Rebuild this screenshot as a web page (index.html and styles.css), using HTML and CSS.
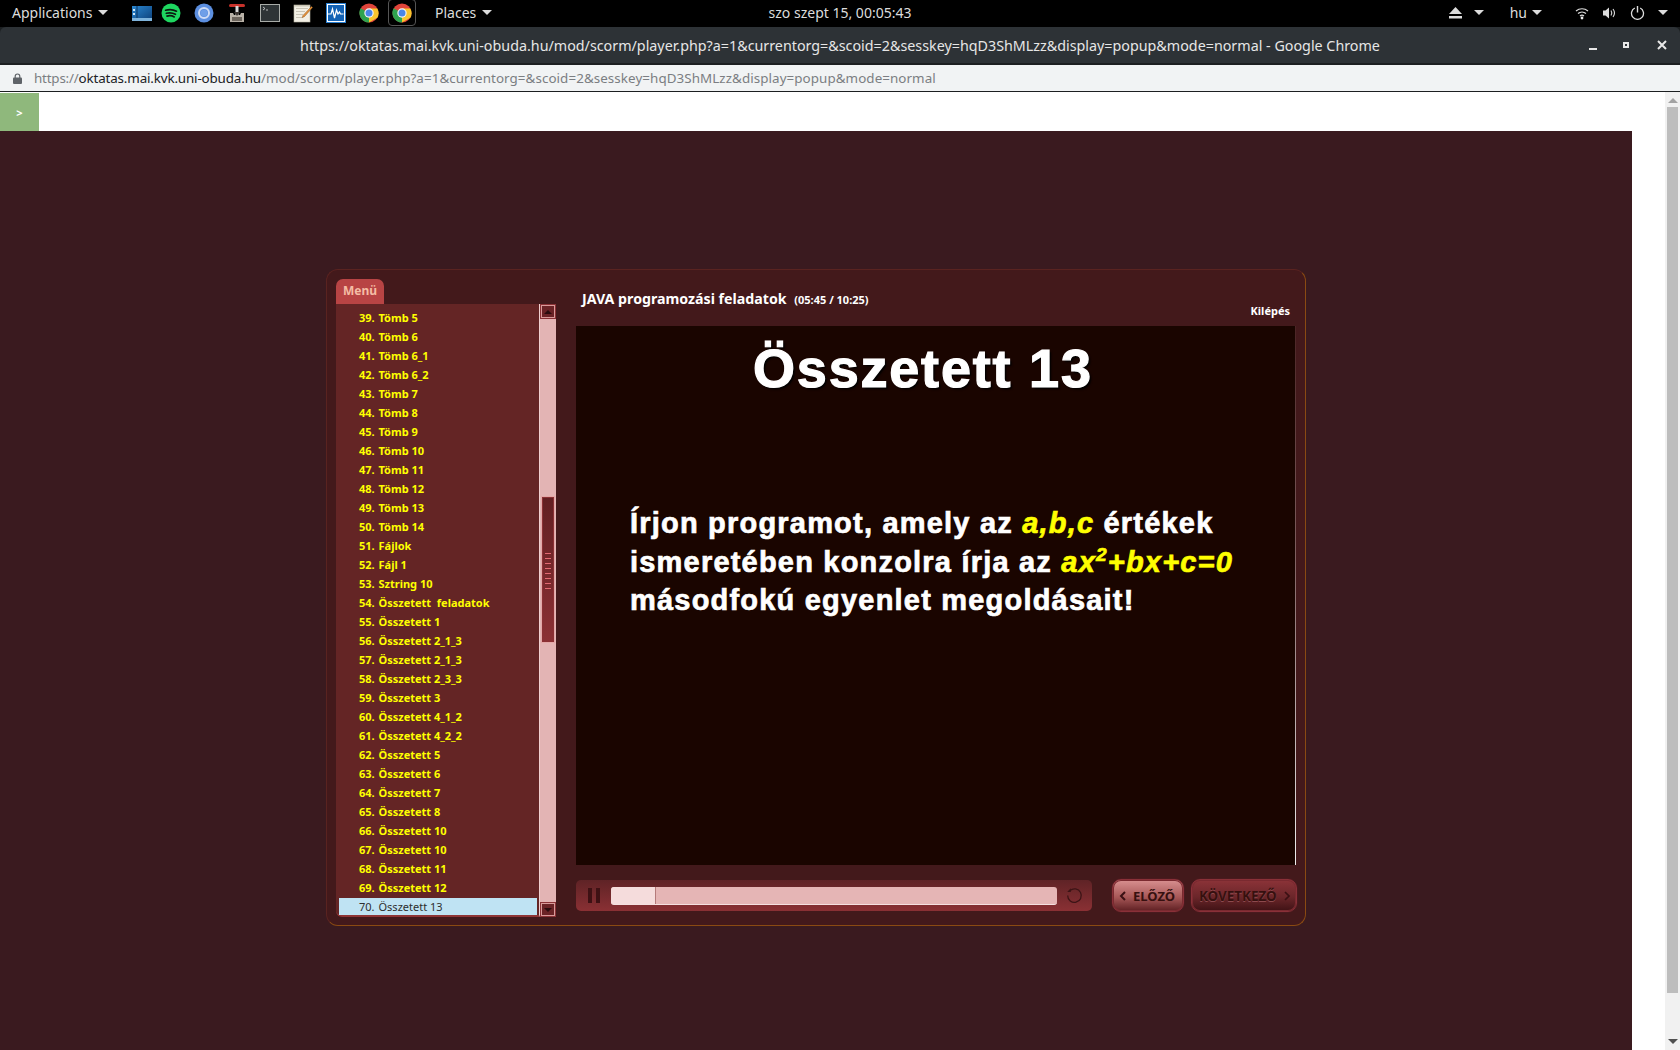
FILE: index.html
```html
<!DOCTYPE html>
<html lang="hu">
<head>
<meta charset="utf-8">
<title>JAVA programozási feladatok</title>
<link rel="stylesheet" href="styles.css">
</head>
<body>
<header class="topbar">
  <div class="tb-left">
    <span class="tb-label tb-apps">Applications<i class="caret"></i></span>
    <div class="launcher">
      <span class="lb lb-first"><svg width="20" height="20" viewBox="0 0 20 20"><defs><linearGradient id="g1" x1="0" y1="0" x2="1" y2="1"><stop offset="0" stop-color="#2a86cf"/><stop offset="1" stop-color="#0d3f78"/></linearGradient></defs><rect y="3" width="20" height="15" fill="url(#g1)"/><rect y="15" width="20" height="3" fill="#7fb4dc"/><path d="M1 6h2v2H1zM1 10h2v2H1z" fill="#cfe6f7"/><path d="M5 3v12" stroke="#0a3560"/></svg></span>
      <span class="lb"><svg width="20" height="20" viewBox="0 0 20 20"><circle cx="10" cy="10" r="9.500" fill="#1ed760"/><path d="M4.600 7.200c3.800-1.100 7.600-.8 10.900 1M5.300 10.300c3.200-.9 6.300-.6 9.100 1M6 13.100c2.600-.7 5-.5 7.300.8" fill="none" stroke="#0b1a10" stroke-width="1.700" stroke-linecap="round"/></svg></span>
      <span class="lb"><svg width="20" height="20" viewBox="0 0 20 20"><circle cx="10" cy="10" r="9.500" fill="#5c8fe0"/><circle cx="10" cy="10" r="5" fill="none" stroke="#cfdcf5" stroke-width="2"/><circle cx="10" cy="10" r="3.300" fill="#6f9fe8"/></svg></span>
      <span class="lb"><svg width="20" height="20" viewBox="0 0 20 20"><rect x="2" y="1" width="16" height="3" rx="1.500" fill="#c8322b"/><rect x="8.500" y="3" width="3" height="9" fill="#d8d8d8"/><path d="M3 10h3l1 2h6l1-2h3v9H3z" fill="#b9b2a8"/><path d="M7 9l3 4 3-4z" fill="#3c3632"/><rect x="5" y="14" width="10" height="4" fill="#6d665e"/></svg></span>
      <span class="lb"><svg width="20" height="20" viewBox="0 0 20 20"><rect x=".5" y="1.500" width="19" height="17" fill="#2e3436" stroke="#a8aca8"/><path d="M3 4l2 1.500L3 7" fill="none" stroke="#ddd" stroke-width=".8"/><path d="M6 7h2" stroke="#ddd" stroke-width=".8"/></svg></span>
      <span class="lb"><svg width="20" height="20" viewBox="0 0 20 20"><rect x="1" y="2" width="16" height="17" fill="#f2efe4" stroke="#b9b5a4" stroke-width=".6"/><path d="M3 5.500h12M3 8.500h9M3 11.500h7M3 14.500h6" stroke="#bdb9aa" stroke-width=".8"/><path d="M1 2h16v1.500H1z" fill="#c9c5b5"/><path d="M18.500 3.500l1 1-8 9-2.300 1.200.8-2.300z" fill="#e8923a" stroke="#8a5519" stroke-width=".5"/></svg></span>
      <span class="lb"><svg width="20" height="20" viewBox="0 0 20 20"><rect x=".5" y=".5" width="19" height="19" fill="#fff" stroke="#2a7fd0"/><rect x="2" y="2" width="16" height="16" fill="#1262b5"/><path d="M2 11h3l1.500-5 2 9 2-8 1.500 4 1.500-2 1 2h3" fill="none" stroke="#fff" stroke-width="1.200"/></svg></span>
      <span class="lb"><svg width="20" height="20" viewBox="0 0 20 20"><circle cx="10" cy="10" r="9.500" fill="#e0443a"/><path d="M10 10L1.700 5.200A9.500 9.500 0 0 0 10 19.500z" fill="#2fa34f"/><path d="M10 5.500h8.300a9.500 9.500 0 0 1 .1 9.200L10 19.500z" fill="#f9c52d"/><circle cx="10" cy="10" r="4.700" fill="#f4f4f4"/><circle cx="10" cy="10" r="3.500" fill="#4a86e8"/></svg></span>
      <span class="lb lb-active"><svg width="20" height="20" viewBox="0 0 20 20"><circle cx="10" cy="10" r="9.500" fill="#e0443a"/><path d="M10 10L1.700 5.200A9.500 9.500 0 0 0 10 19.500z" fill="#2fa34f"/><path d="M10 5.500h8.300a9.500 9.500 0 0 1 .1 9.200L10 19.500z" fill="#f9c52d"/><circle cx="10" cy="10" r="4.700" fill="#f4f4f4"/><circle cx="10" cy="10" r="3.500" fill="#4a86e8"/></svg></span>
    </div>
    <span class="tb-label tb-places">Places<i class="caret"></i></span>
  </div>
  <div class="tb-clock">szo szept 15, 00:05:43</div>
  <div class="tb-right">
    <span class="tray tray-eject"><svg width="15" height="12" viewBox="0 0 15 12"><path d="M7.500 0L14 7H1z" fill="#ddd"/><rect x="1" y="9" width="13" height="2.500" fill="#ddd"/></svg><i class="caret"></i></span>
    <span class="tb-label tray-hu">hu<i class="caret"></i></span>
    <span class="tray tray-status">
      <svg width="14" height="14" viewBox="0 0 14 14"><path d="M1 5c3.500-3 8.500-3 12 0M3 7.500c2.300-2 5.700-2 8 0M5 10c1.200-1 2.800-1 4 0" fill="none" stroke="#ddd" stroke-width="1.200"/><circle cx="7" cy="12" r="1.400" fill="#eee"/></svg>
      <svg width="15" height="14" viewBox="0 0 15 14"><path d="M1 4.500h2.500L7 1.500v11l-3.500-3H1z" fill="#ddd"/><path d="M9 4.500c1 1.500 1 3.500 0 5M11 3c1.800 2.400 1.800 5.600 0 8" fill="none" stroke="#ddd" stroke-width="1.100"/></svg>
      <svg width="15" height="15" viewBox="0 0 15 15"><path d="M4.800 3a6 6 0 1 0 5.400 0" fill="none" stroke="#ddd" stroke-width="1.300"/><path d="M7.500 1v6.500" stroke="#ddd" stroke-width="1.400"/></svg>
      <i class="caret"></i>
    </span>
  </div>
</header>

<div class="window">
  <div class="titlebar">
    <div class="win-title">https://oktatas.mai.kvk.uni-obuda.hu/mod/scorm/player.php?a=1&amp;currentorg=&amp;scoid=2&amp;sesskey=hqD3ShMLzz&amp;display=popup&amp;mode=normal - Google Chrome</div>
    <div class="win-btns">
      <i class="wb wb-min"></i>
      <i class="wb wb-max"></i>
      <svg class="wb-close" width="10" height="10" viewBox="0 0 10 10"><path d="M1 1l8 8M9 1l-8 8" stroke="#e8e8e8" stroke-width="2"/></svg>
    </div>
  </div>
  <div class="addrbar">
    <svg class="lock" width="9" height="11" viewBox="0 0 9 11"><path d="M2.200 5V3.300a2.300 2.300 0 0 1 4.600 0V5" fill="none" stroke="#5f6368" stroke-width="1.200"/><rect y="4.500" width="9" height="6.500" rx="1" fill="#5f6368"/></svg>
    <span class="url"><span class="url-scheme">https://</span><span class="url-host">oktatas.mai.kvk.uni-obuda.hu</span><span class="url-path">/mod/scorm/player.php?a=1&amp;currentorg=&amp;scoid=2&amp;sesskey=hqD3ShMLzz&amp;display=popup&amp;mode=normal</span></span>
  </div>

  <div class="viewport">
    <div class="page">
      <div class="strip"><button class="toggle">&gt;</button></div>
      <main class="stagebg">
        <section class="card">
          <aside class="side">
            <div class="tab">Menü</div>
            <div class="listwrap">
              <ol class="list">
                <li class="row"><span class="n">39.</span><span>Tömb 5</span></li>
                <li class="row"><span class="n">40.</span><span>Tömb 6</span></li>
                <li class="row"><span class="n">41.</span><span>Tömb 6_1</span></li>
                <li class="row"><span class="n">42.</span><span>Tömb 6_2</span></li>
                <li class="row"><span class="n">43.</span><span>Tömb 7</span></li>
                <li class="row"><span class="n">44.</span><span>Tömb 8</span></li>
                <li class="row"><span class="n">45.</span><span>Tömb 9</span></li>
                <li class="row"><span class="n">46.</span><span>Tömb 10</span></li>
                <li class="row"><span class="n">47.</span><span>Tömb 11</span></li>
                <li class="row"><span class="n">48.</span><span>Tömb 12</span></li>
                <li class="row"><span class="n">49.</span><span>Tömb 13</span></li>
                <li class="row"><span class="n">50.</span><span>Tömb 14</span></li>
                <li class="row"><span class="n">51.</span><span>Fájlok</span></li>
                <li class="row"><span class="n">52.</span><span>Fájl 1</span></li>
                <li class="row"><span class="n">53.</span><span>Sztring 10</span></li>
                <li class="row"><span class="n">54.</span><span>Összetett&nbsp; feladatok</span></li>
                <li class="row"><span class="n">55.</span><span>Összetett 1</span></li>
                <li class="row"><span class="n">56.</span><span>Összetett 2_1_3</span></li>
                <li class="row"><span class="n">57.</span><span>Összetett 2_1_3</span></li>
                <li class="row"><span class="n">58.</span><span>Összetett 2_3_3</span></li>
                <li class="row"><span class="n">59.</span><span>Összetett 3</span></li>
                <li class="row"><span class="n">60.</span><span>Összetett 4_1_2</span></li>
                <li class="row"><span class="n">61.</span><span>Összetett 4_2_2</span></li>
                <li class="row"><span class="n">62.</span><span>Összetett 5</span></li>
                <li class="row"><span class="n">63.</span><span>Összetett 6</span></li>
                <li class="row"><span class="n">64.</span><span>Összetett 7</span></li>
                <li class="row"><span class="n">65.</span><span>Összetett 8</span></li>
                <li class="row"><span class="n">66.</span><span>Összetett 10</span></li>
                <li class="row"><span class="n">67.</span><span>Összetett 10</span></li>
                <li class="row"><span class="n">68.</span><span>Összetett 11</span></li>
                <li class="row"><span class="n">69.</span><span>Összetett 12</span></li>
                <li class="row row-current"><span class="n">70.</span><span>Összetett 13</span></li>
              </ol>
              <div class="mscroll">
                <span class="mbtn"><i class="tri-up"></i></span>
                <div class="mtrack">
                  <div class="mthumb"><div class="grip"><i></i><i></i><i></i><i></i><i></i><i></i><i></i><i></i></div></div>
                </div>
                <span class="mbtn"><i class="tri-down"></i></span>
              </div>
            </div>
          </aside>
          <div class="content">
            <div class="head">
              <div class="heading">JAVA programozási feladatok <small>(05:45 / 10:25)</small></div>
              <div class="exit">Kilépés</div>
            </div>
            <div class="slide">
              <h1>Összetett 13</h1>
              <p>Írjon programot, amely az <em>a,b,c</em> értékek<br>ismeretében konzolra írja az <em>ax<sup>2</sup>+bx+c=0</em><br>másodfokú egyenlet megoldásait!</p>
            </div>
            <div class="controls">
              <div class="player">
                <span class="pause"><i></i><i></i></span>
                <div class="bar"><div class="bar-fill"></div></div>
                <svg class="reload" width="17" height="17" viewBox="0 0 17 17"><path d="M4 3.500A6.800 6.800 0 1 1 1.700 8.500" fill="none" stroke="#3c1416" stroke-width="1.300"/><path d="M4.800 1.300v3.600H1.200z" fill="#3c1416"/></svg>
              </div>
              <button class="nav nav-prev"><svg width="8" height="10" viewBox="0 0 8 10"><path d="M6 1L2 5l4 4" fill="none" stroke="#3a1013" stroke-width="2"/></svg>ELŐZŐ</button>
              <button class="nav nav-next">KÖVETKEZŐ<svg width="8" height="10" viewBox="0 0 8 10"><path d="M2 1l4 4-4 4" fill="none" stroke="#3a1013" stroke-width="1.700"/></svg></button>
            </div>
          </div>
        </section>
      </main>
    </div>
    <div class="vscroll"><i class="vs-up"></i><div class="vs-thumb"></div><i class="vs-down"></i></div>
  </div>
</div>
</body>
</html>
```
FILE: styles.css
```css
* { box-sizing: border-box; }
html, body { margin: 0; height: 100%; }
body { width: 1680px; height: 1050px; overflow: hidden; background: #000; font-family: "Noto Sans", sans-serif; display: flex; flex-direction: column; }

.topbar { height: 27px; padding-bottom: 2px; background: #000; color: #dcdcdc; display: flex; align-items: center; position: relative; flex: none; font-size: 14px; }
.tb-left { display: flex; align-items: center; }
.tb-label { display: inline-flex; align-items: center; gap: 6px; }
.tb-apps { margin-left: 12px; width: 113px; }
.caret { display: inline-block; width: 0; height: 0; border-left: 5px solid transparent; border-right: 5px solid transparent; border-top: 5px solid #dcdcdc; }
.launcher { display: flex; align-items: center; }
.lb { width: 33px; display: flex; justify-content: center; }
.lb-first { margin-right: -4px; }
.lb-active { width: 28px; height: 27px; margin-left: 3px; border: 1px solid #555; border-radius: 4px; align-items: center; }
.tb-places { margin-left: 19px; }
.tb-clock { position: absolute; left: 0; right: 0; top: 3px; text-align: center; font-size: 14px; pointer-events: none; }
.tb-right { margin-left: auto; display: flex; align-items: center; padding-right: 12px; }
.tray { display: inline-flex; align-items: center; }
.tray-eject { gap: 11px; }
.tray-hu { margin-left: 26px; gap: 5px; }
.tray-status { margin-left: 33px; gap: 13px; }

.window { flex: 1; display: flex; flex-direction: column; min-height: 0; background: #1c1f21; }
.titlebar { height: 36px; background: #2d3236; border-radius: 6px 6px 0 0; display: flex; align-items: center; position: relative; flex: none; color: #e6e6e6; font-size: 14.300px; }
.win-title { width: 100%; text-align: center; white-space: nowrap; }
.win-btns { position: absolute; right: 0; top: 0; bottom: 0; display: flex; align-items: center; }
.wb-close { margin: 0 13px 0 0; }
.wb { display: block; }
.wb-min { width: 8px; height: 2px; background: #e8e8e8; margin: 8px 26px 0 0; }
.wb-max { width: 6px; height: 6px; border: 2px solid #e8e8e8; background: #2d3236; margin-right: 28px; }

.addrbar { height: 26px; margin-top: 2px; background: #f1f3f4; display: flex; align-items: center; flex: none; font-size: 13.400px; color: #202124; }
.lock { margin: 0 0 0 13px; }
.url { margin-left: 12px; white-space: nowrap; }
.url-scheme { color: #7b7e82; letter-spacing: -.2px; }
.url-host { letter-spacing: -.15px; }
.url-path { color: #7b7e82; letter-spacing: .07px; }

.viewport { flex: 1; min-height: 0; display: flex; border-top: 1px solid #1c1f21; background: #fff; }
.page { width: 1632px; flex: none; display: flex; flex-direction: column; }
.strip { height: 39px; background: #fff; padding-top: 1px; flex: none; }
.toggle { display: block; width: 39px; height: 38px; background: #8fb87c; color: #fff; border: 0; padding: 0; font: 700 11px "Noto Sans", sans-serif; }
.stagebg { flex: 1; background: #3a1a1f; padding: 138px 0 0 326px; }

.card { width: 980px; height: 657px; background: #43191b; border: 1px solid #5a2320; border-bottom-color: #8a4a12; border-right-color: #8a4a12; border-radius: 12px; padding: 9px 10px 8px 9px; display: flex; }
.side { width: 219px; flex: none; display: flex; flex-direction: column; }
.tab { width: 48px; height: 25px; background: #b84444; border-radius: 7px 7px 0 0; color: #f5bda5; font: 700 12px/23px "Noto Sans", sans-serif; text-align: center; flex: none; }
.listwrap { display: flex; height: 613px; }
.list { list-style: none; margin: 0; padding: 5px 2px 0 3px; width: 204px; flex: none; height: 613px; background: #642525; border-right: 1px solid #f0d0d0; border-bottom: 2px solid #8f3535; border-radius: 0 0 0 6px; }
.row { height: 17px; margin-bottom: 2px; display: flex; padding-left: 20px; color: #ffff00; font: 700 11px/17px "Noto Sans", sans-serif; white-space: pre; }
.n { width: 19.500px; flex: none; }
.row-current { background: #bfe3f3; color: #2e2e2e; font-weight: 400; margin: 0; }

.mscroll { width: 16px; display: flex; flex-direction: column; background: #e3b4b4; flex: none; height: 613px; }
.mbtn { height: 15px; flex: none; background: #6a2326; border: 1px solid #8b3236; box-shadow: inset 0 0 0 1px #d99a9a; display: flex; align-items: center; justify-content: center; }
.tri-up { width: 0; height: 0; border-left: 4px solid transparent; border-right: 4px solid transparent; border-bottom: 4px solid #2a0c0e; }
.tri-down { width: 0; height: 0; border-left: 4px solid transparent; border-right: 4px solid transparent; border-top: 4px solid #2a0c0e; }
.mtrack { flex: 1; padding-top: 177px; }
.mthumb { height: 147px; margin: 0 1px; border: 1px solid #e3a8a8; background: linear-gradient(#621f22, #8b3034); box-shadow: inset 0 0 0 1px #8b3034; padding: 56px 3px 0; }
.grip i { display: block; height: 1px; margin-bottom: 4px; background: #e26a72; }

.content { flex: 1; margin-left: 21px; min-width: 0; display: flex; flex-direction: column; }
.head { height: 47px; flex: none; position: relative; color: #fff; }
.heading { position: absolute; left: 6px; top: 10px; font: 700 14.200px/20px "Noto Sans", sans-serif; white-space: nowrap; }
.heading small { font-size: 11px; margin-left: 4px; }
.exit { position: absolute; right: 5px; top: 24px; font: 700 11px/16px "Noto Sans", sans-serif; }

.slide { height: 539px; width: 720px; flex: none; background: #1a0500; border-right: 1px solid; border-image: linear-gradient(#4a2424, #7a5a5a 40%, #eeeeee) 1; color: #fff; font-family: "Liberation Sans", Arial, sans-serif; font-weight: 700; }
.slide h1 { margin: 0; padding: 11px 0 0 177px; font-size: 54px; line-height: 62px; letter-spacing: 1.800px; -webkit-text-stroke: 1.200px #fff; text-shadow: 2px 2px 2px #000; white-space: nowrap; }
.slide p { margin: 0; padding: 105px 0 0 54px; font-size: 29px; line-height: 38.500px; letter-spacing: 1.200px; -webkit-text-stroke: .7px #fff; white-space: nowrap; }
.slide em { color: #ffff00; -webkit-text-stroke: .7px #ffff00; }
.slide sup { font-size: 19px; line-height: 0; }

.controls { display: flex; align-items: flex-start; padding-top: 15px; }
.player { width: 516px; height: 31px; background: linear-gradient(#5f2326, #8a3034); border-radius: 5px; display: flex; align-items: center; padding-left: 12px; flex: none; }
.pause { display: flex; gap: 4px; width: 23px; flex: none; }
.pause i { width: 4px; height: 15px; background: #3e1114; }
.bar { width: 446px; height: 18px; background: #e5b5b5; border-radius: 3px; border-bottom: 1px solid #f5e0e0; flex: none; overflow: hidden; }
.bar-fill { width: 45px; height: 100%; background: #f5dcdc; border-right: 1px solid #b57a7a; }
.reload { margin-left: 9px; flex: none; }
.nav { height: 33px; margin-top: -1px; border: 1px solid #8a3038; border-radius: 9px; box-shadow: 0 0 0 1px #4a1a1e, inset 0 0 0 1px #7a2a30; font: 700 13px "Noto Sans", sans-serif; color: #36100f; display: flex; align-items: center; padding: 0; flex: none; }
.nav-prev { width: 72px; margin-left: 20px; background: linear-gradient(#d89090, #a85858 55%, #5f2023); gap: 6px; padding-left: 6px; }
.nav-next { width: 106px; margin-left: 7px; background: linear-gradient(#8c3338, #6b262a 55%, #3f1215); gap: 6px; padding-left: 7px; font-size: 13.400px; text-shadow: 0 1px 0 #8d4a4e; }

.vscroll { flex: none; width: 15px; margin-left: 33px; background: #f1f1f1; display: flex; flex-direction: column; align-items: center; padding-top: 6px; }
.vs-up { width: 0; height: 0; border-left: 5px solid transparent; border-right: 5px solid transparent; border-bottom: 5px solid #a3a3a3; flex: none; }
.vs-thumb { width: 11px; height: 886px; margin-top: 4px; background: #bdbdbd; flex: none; }
.vs-down { width: 0; height: 0; border-left: 5px solid transparent; border-right: 5px solid transparent; border-top: 5px solid #505050; margin-top: 46px; flex: none; }
```
